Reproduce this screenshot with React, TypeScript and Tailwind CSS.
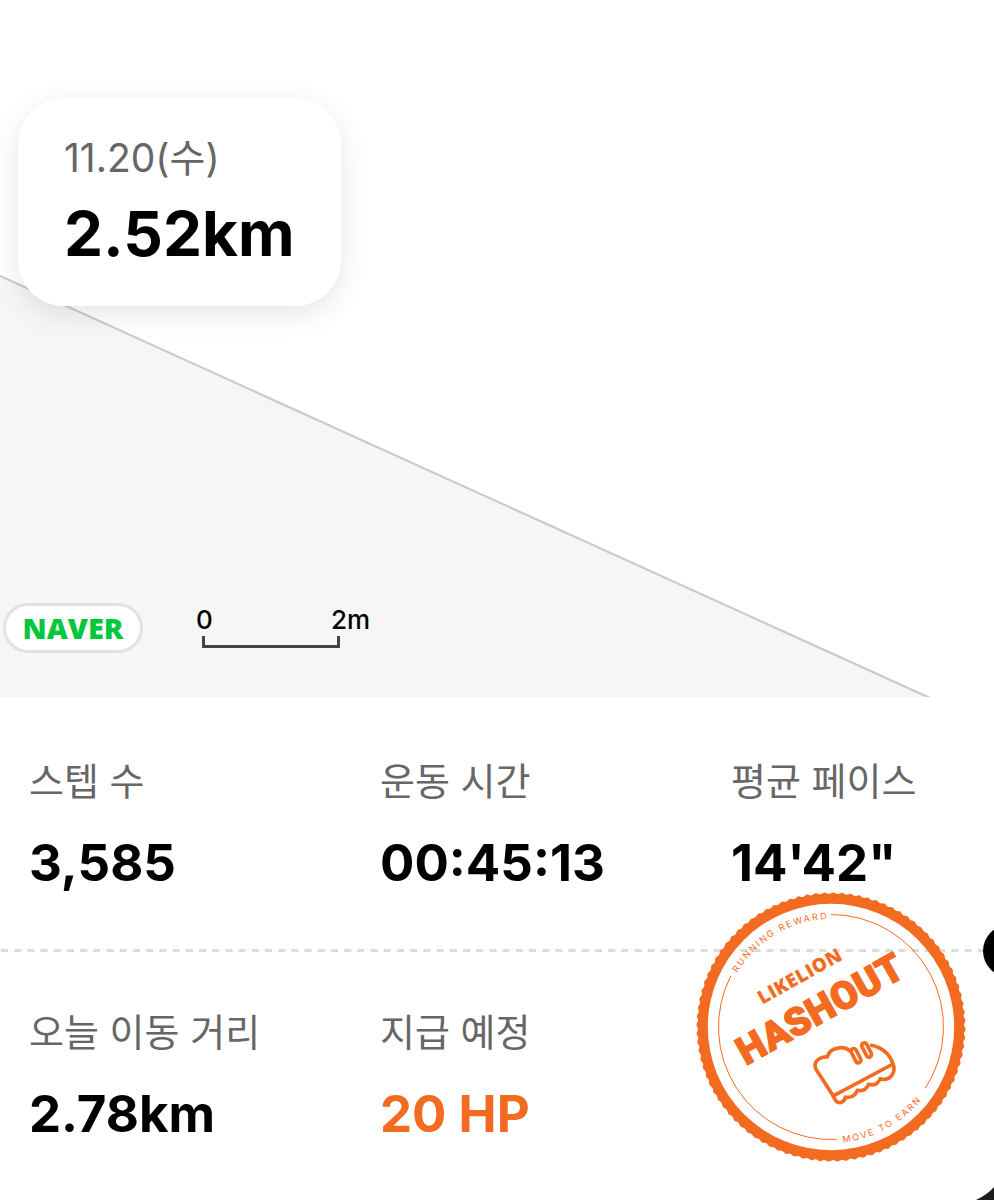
type Stat = {
  label: string;
  value: string;
  highlight?: boolean;
};

const workoutStats: Stat[] = [
  { label: "스텝 수", value: "3,585" },
  { label: "운동 시간", value: "00:45:13" },
  { label: "평균 페이스", value: "14'42\"" },
];

const rewardStats: Stat[] = [
  { label: "오늘 이동 거리", value: "2.78km" },
  { label: "지급 예정", value: "20 HP", highlight: true },
];

const STAMP_CENTER = 135;

function pointAt(radius: number, deg: number) {
  const rad = (deg * Math.PI) / 180;
  const x = STAMP_CENTER + radius * Math.cos(rad);
  const y = STAMP_CENTER + radius * Math.sin(rad);
  return `${x.toFixed(2)} ${y.toFixed(2)}`;
}

function arc(radius: number, from: number, to: number) {
  const sweep = to > from ? 1 : 0;
  return `M${pointAt(radius, from)}A${radius} ${radius} 0 0 ${sweep} ${pointAt(radius, to)}`;
}

// wavy outer edge + round hole, filled with evenodd
function stampRing(teeth: number, outer: number, inner: number) {
  const step = 360 / teeth;
  let d = `M${pointAt(outer, 0)}`;
  for (let i = 0; i < teeth; i++) {
    d += `Q${pointAt(outer + 1.6, (i + 0.25) * step)} ${pointAt(outer, (i + 0.5) * step)}`;
    d += `Q${pointAt(outer - 1.4, (i + 0.75) * step)} ${pointAt(outer, (i + 1) * step)}`;
  }
  d += `ZM${pointAt(inner, 0)}A${inner} ${inner} 0 1 0 ${pointAt(inner, 180)}A${inner} ${inner} 0 1 0 ${pointAt(inner, 0)}Z`;
  return d;
}

function RewardStamp() {
  return (
    <svg
      viewBox="0 0 270 270"
      role="img"
      aria-label="LIKELION HASHOUT"
      className="absolute right-[28px] bottom-[38px] size-[270px] text-[#f36b21]"
      fill="currentColor"
    >
      <defs>
        <path id="stamp-top" d={arc(108, 210, 300)} />
        <path id="stamp-bottom" d={arc(116, 84, 10)} />
      </defs>
      <path d={stampRing(96, 133.8, 123.2)} fillRule="evenodd" />
      <g fill="none" stroke="currentColor" strokeWidth="1">
        <path d={arc(112.5, -90, 33)} />
        <path d={arc(112.5, 87, 207)} />
      </g>
      <g className="font-['Inter',sans-serif] text-[9px] tracking-[2px]">
        <text>
          <textPath href="#stamp-top">RUNNING REWARD</textPath>
        </text>
        <text>
          <textPath href="#stamp-bottom">MOVE TO EARN</textPath>
        </text>
      </g>
      <g transform="rotate(-29.3 135 135)">
        <text x="86" y="82" className="font-['Open_Sans',sans-serif] text-[19px] font-extrabold tracking-wide">
          LIKELION
        </text>
        <text
          x="42"
          y="127"
          stroke="currentColor"
          strokeWidth="2"
          className="font-['Roboto',sans-serif] text-[38px] font-extrabold tracking-wide"
        >
          HASHOUT
        </text>
      </g>
      <g
        transform="translate(24 108) scale(.3333)"
        fill="none"
        stroke="currentColor"
        strokeWidth="11"
        strokeLinecap="round"
        strokeLinejoin="round"
      >
        <path d="M340 288L288 208Q278 186 300 175Q310 170 322 171Q328 150 348 146Q374 137 391 154" />
        <path d="M455 136Q505 148 519 192L340 288" />
        <path d="M340 288Q348 309 360 308Q375 304 376 291Q402 296 412 271Q436 277 446 253Q471 260 481 236Q506 244 518 222Q526 208 519 192" />
        <rect x="400" y="144" width="16" height="46" rx="8" transform="rotate(-27 408 167)" />
        <rect x="432" y="127" width="16" height="46" rx="8" transform="rotate(-27 440 150)" />
      </g>
    </svg>
  );
}

function StatItem({ label, value, highlight }: Stat) {
  return (
    <div className="flex flex-col gap-6 whitespace-nowrap">
      <dt className="text-[38px] leading-[48px] font-normal text-[#666]">{label}</dt>
      <dd className={`text-[51px] leading-[68px] font-bold ${highlight ? "text-[#f36b21]" : "text-black"}`}>
        {value}
      </dd>
    </div>
  );
}

function RunMap() {
  return (
    <section className="relative flex h-[697px] flex-col items-start justify-between overflow-hidden bg-white pt-[98px] pb-[44px]">
      <svg viewBox="0 0 994 697" preserveAspectRatio="none" className="absolute inset-0 size-full" aria-hidden="true">
        <path d="M0 276L930 697H0Z" fill="#f6f6f6" />
        <path d="M-2 275L930 698" stroke="#cfc9c4" strokeWidth="2.2" />
      </svg>

      <div className="relative ml-[18px] flex flex-col gap-3 rounded-[46px] bg-white px-[46px] py-[34px] shadow-[0_8px_28px_rgba(0,0,0,0.1)]">
        <p className="text-[39px] leading-[52px] font-normal text-[#666]">11.20(수)</p>
        <p className="text-[62px] leading-[76px] font-bold">2.52km</p>
      </div>

      <div className="relative flex items-end gap-[53px] pl-[3px]">
        <div className="flex h-[50px] w-[140px] items-center justify-center rounded-full border-3 border-[#e3e1e1] bg-white pb-0.5 font-['Open_Sans',sans-serif] text-[29px] leading-none font-extrabold text-[#03c73c]">
          NAVER
        </div>
        <div className="mb-[5px] w-[174px]">
          <div className="flex justify-between text-[26px] leading-8 font-medium">
            <span>0</span>
            <span>2m</span>
          </div>
          <div className="ml-[6px] h-[12px] w-[138px] border-3 border-t-0 border-[#444]" />
        </div>
      </div>
    </section>
  );
}

export default function App() {
  return (
    <main className="overflow-hidden bg-white font-['Inter','Noto_Sans_CJK_KR',sans-serif] text-black">
      <RunMap />
      <section className="relative overflow-hidden bg-white">
        <dl className="grid grid-cols-3 gap-x-22 pt-[60px] pb-[52px] pl-[29px]">
          {workoutStats.map((s) => (
            <StatItem key={s.label} {...s} />
          ))}
        </dl>

        {/* ticket tear line */}
        <div className="relative h-[3px]">
          <svg className="block h-[3px] w-full" aria-hidden="true">
            <line x1="1" y1="1.5" x2="100%" y2="1.5" stroke="#dcdcdc" strokeWidth="3" strokeDasharray="7 6.2" />
          </svg>
          <div className="absolute top-1/2 -right-[41px] size-[52px] -translate-y-1/2 rounded-full bg-black" />
        </div>

        <dl className="grid grid-cols-3 gap-x-22 pt-14 pb-[52px] pl-[29px]">
          {rewardStats.map((s) => (
            <StatItem key={s.label} {...s} />
          ))}
        </dl>

        <RewardStamp />
        <svg viewBox="0 0 18 13" className="absolute right-0 bottom-0 h-[13px] w-[18px]" aria-hidden="true">
          <path d="M18 0Q11 8 0 13H18Z" fill="#1c1c1c" />
        </svg>
      </section>
    </main>
  );
}
